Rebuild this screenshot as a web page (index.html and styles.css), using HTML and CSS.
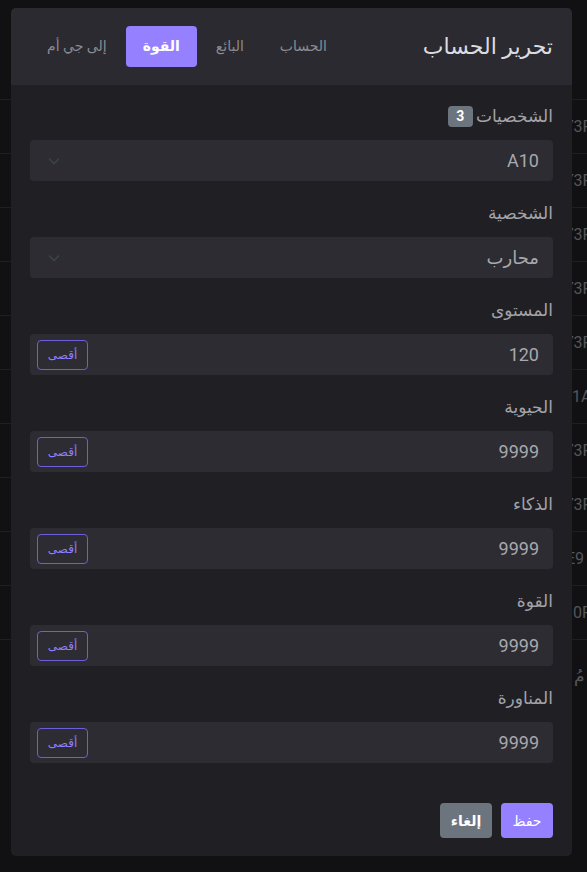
FILE: index.html
```html
<!DOCTYPE html>
<html lang="ar" dir="rtl">
<head>
<meta charset="utf-8">
<title>تحرير الحساب</title>
<link rel="stylesheet" href="styles.css">
</head>
<body>
<div class="page">
  <div class="row"><span class="cell c-y">Y3F</span></div>
  <div class="row"><span class="cell c-y">Y3F</span></div>
  <div class="row"><span class="cell c-y">Y3F</span></div>
  <div class="row"><span class="cell c-y">Y3F</span></div>
  <div class="row"><span class="cell c-y">Y3F</span></div>
  <div class="row"><span class="cell c-1">1A</span></div>
  <div class="row"><span class="cell c-y">Y3F</span></div>
  <div class="row"><span class="cell c-y">Y3F</span></div>
  <div class="row"><span class="cell c-e">E9</span></div>
  <div class="row"><span class="cell c-0">0F</span></div>
  <div class="row row-last"><span class="cell c-ar">مُ</span></div>
</div>

<div class="modal">
  <div class="modal-header">
    <h1 class="title">تحرير الحساب</h1>
    <nav class="tabs">
      <span class="tab">الحساب</span>
      <span class="tab">البائع</span>
      <span class="tab active">القوة</span>
      <span class="tab">إلى جي أم</span>
    </nav>
  </div>
  <div class="modal-body">
    <div class="field">
      <div class="label">الشخصيات <span class="badge">3</span></div>
      <div class="control">
        <span class="value">A10</span>
        <svg class="chev" width="12" height="8" viewBox="0 0 12 8"><path d="M1 1.5 L6 6.5 L11 1.5" fill="none" stroke="#3d4346" stroke-width="1.6"/></svg>
      </div>
    </div>
    <div class="field">
      <div class="label">الشخصية</div>
      <div class="control">
        <span class="value">محارب</span>
        <svg class="chev" width="12" height="8" viewBox="0 0 12 8"><path d="M1 1.5 L6 6.5 L11 1.5" fill="none" stroke="#3d4346" stroke-width="1.6"/></svg>
      </div>
    </div>
    <div class="field">
      <div class="label">المستوى</div>
      <div class="control">
        <span class="value">120</span>
        <button class="max">أقصى</button>
      </div>
    </div>
    <div class="field">
      <div class="label">الحيوية</div>
      <div class="control">
        <span class="value">9999</span>
        <button class="max">أقصى</button>
      </div>
    </div>
    <div class="field">
      <div class="label">الذكاء</div>
      <div class="control">
        <span class="value">9999</span>
        <button class="max">أقصى</button>
      </div>
    </div>
    <div class="field">
      <div class="label">القوة</div>
      <div class="control">
        <span class="value">9999</span>
        <button class="max">أقصى</button>
      </div>
    </div>
    <div class="field">
      <div class="label">المناورة</div>
      <div class="control">
        <span class="value">9999</span>
        <button class="max">أقصى</button>
      </div>
    </div>
  </div>
  <div class="modal-footer">
    <button class="btn btn-save">حفظ</button>
    <button class="btn btn-cancel">إلغاء</button>
  </div>
</div>
</body>
</html>
```
FILE: styles.css
```css
* { box-sizing: border-box; }
html, body { margin: 0; padding: 0; }
body {
  width: 587px;
  height: 872px;
  overflow: hidden;
  background: #111113;
  font-family: Roboto, "DejaVu Sans", sans-serif;
  position: relative;
}

/* background page (dimmed) */
.page {
  padding-top: 99px;
  direction: ltr;
}
.row {
  height: 54px;
  border-top: 1px solid #1f1f23;
  display: flex;
  align-items: center;
}
.row-last { height: 72px; }
.cell {
  color: #55565b;
  font-size: 16px;
  white-space: nowrap;
}
.c-y { margin-left: 564px; }
.c-1 { margin-left: 572px; }
.c-e { margin-left: 566px; }
.c-0 { margin-left: 573px; }
.c-ar { margin-left: 574px; font-size: 17px; }

/* modal */
.modal {
  position: absolute;
  left: 11px;
  top: 8px;
  width: 561px;
  height: 848px;
  background: #202024;
  border-radius: 5px;
  overflow: hidden;
  display: flex;
  flex-direction: column;
}
.modal-header {
  height: 77px;
  background: #2a2a30;
  display: flex;
  align-items: center;
  padding: 0 19px;
}
.title {
  margin: 0;
  font-size: 22px;
  font-weight: normal;
  color: #dcdce0;
}
.tabs {
  margin-right: auto;
  display: flex;
  align-items: center;
  gap: 2px;
}
.tab {
  height: 41px;
  line-height: 41px;
  padding: 0 17px;
  font-size: 14px;
  color: #8b8b91;
  border-radius: 4px;
}
.tab.active {
  background: #9580ff;
  color: #ffffff;
  font-weight: bold;
}

.modal-body {
  padding: 19px 19px 0;
  display: flex;
  flex-direction: column;
  gap: 20px;
  flex: 1;
}
.field { display: flex; flex-direction: column; }
.label {
  height: 24px;
  line-height: 24px;
  font-size: 17px;
  color: #a3a3a9;
  margin-bottom: 12px;
  display: flex;
  align-items: center;
  gap: 3px;
}
.badge {
  display: inline-block;
  min-width: 25px;
  height: 21px;
  line-height: 21px;
  padding: 0 6px;
  border-radius: 4px;
  background: #6c757d;
  color: #ffffff;
  font-weight: bold;
  font-size: 14px;
  text-align: center;
  font-family: Roboto, sans-serif;
}
.control {
  height: 41px;
  background: #2c2c32;
  border-radius: 4px;
  display: flex;
  align-items: center;
  padding: 0 14px 0 7px;
}
.value {
  font-size: 18px;
  color: #a8a8ae;
}
.chev { margin-right: auto; margin-left: 11px; }
.max {
  margin-right: auto;
  width: 51px;
  height: 30px;
  border: 1.5px solid #6d5fd8;
  border-radius: 4px;
  background: transparent;
  color: #8f80ff;
  font-size: 12px;
  font-family: Roboto, "DejaVu Sans", sans-serif;
  padding: 0;
}

.modal-footer {
  display: flex;
  gap: 9px;
  padding: 0 19px 18px;
}
.btn {
  width: 52px;
  height: 35px;
  border: none;
  border-radius: 4px;
  color: #ffffff;
  font-size: 14px;
  font-family: Roboto, "DejaVu Sans", sans-serif;
  padding: 0;
}
.btn-save { background: #9580ff; }
.btn-cancel { background: #6c757d; font-weight: bold; }
```
